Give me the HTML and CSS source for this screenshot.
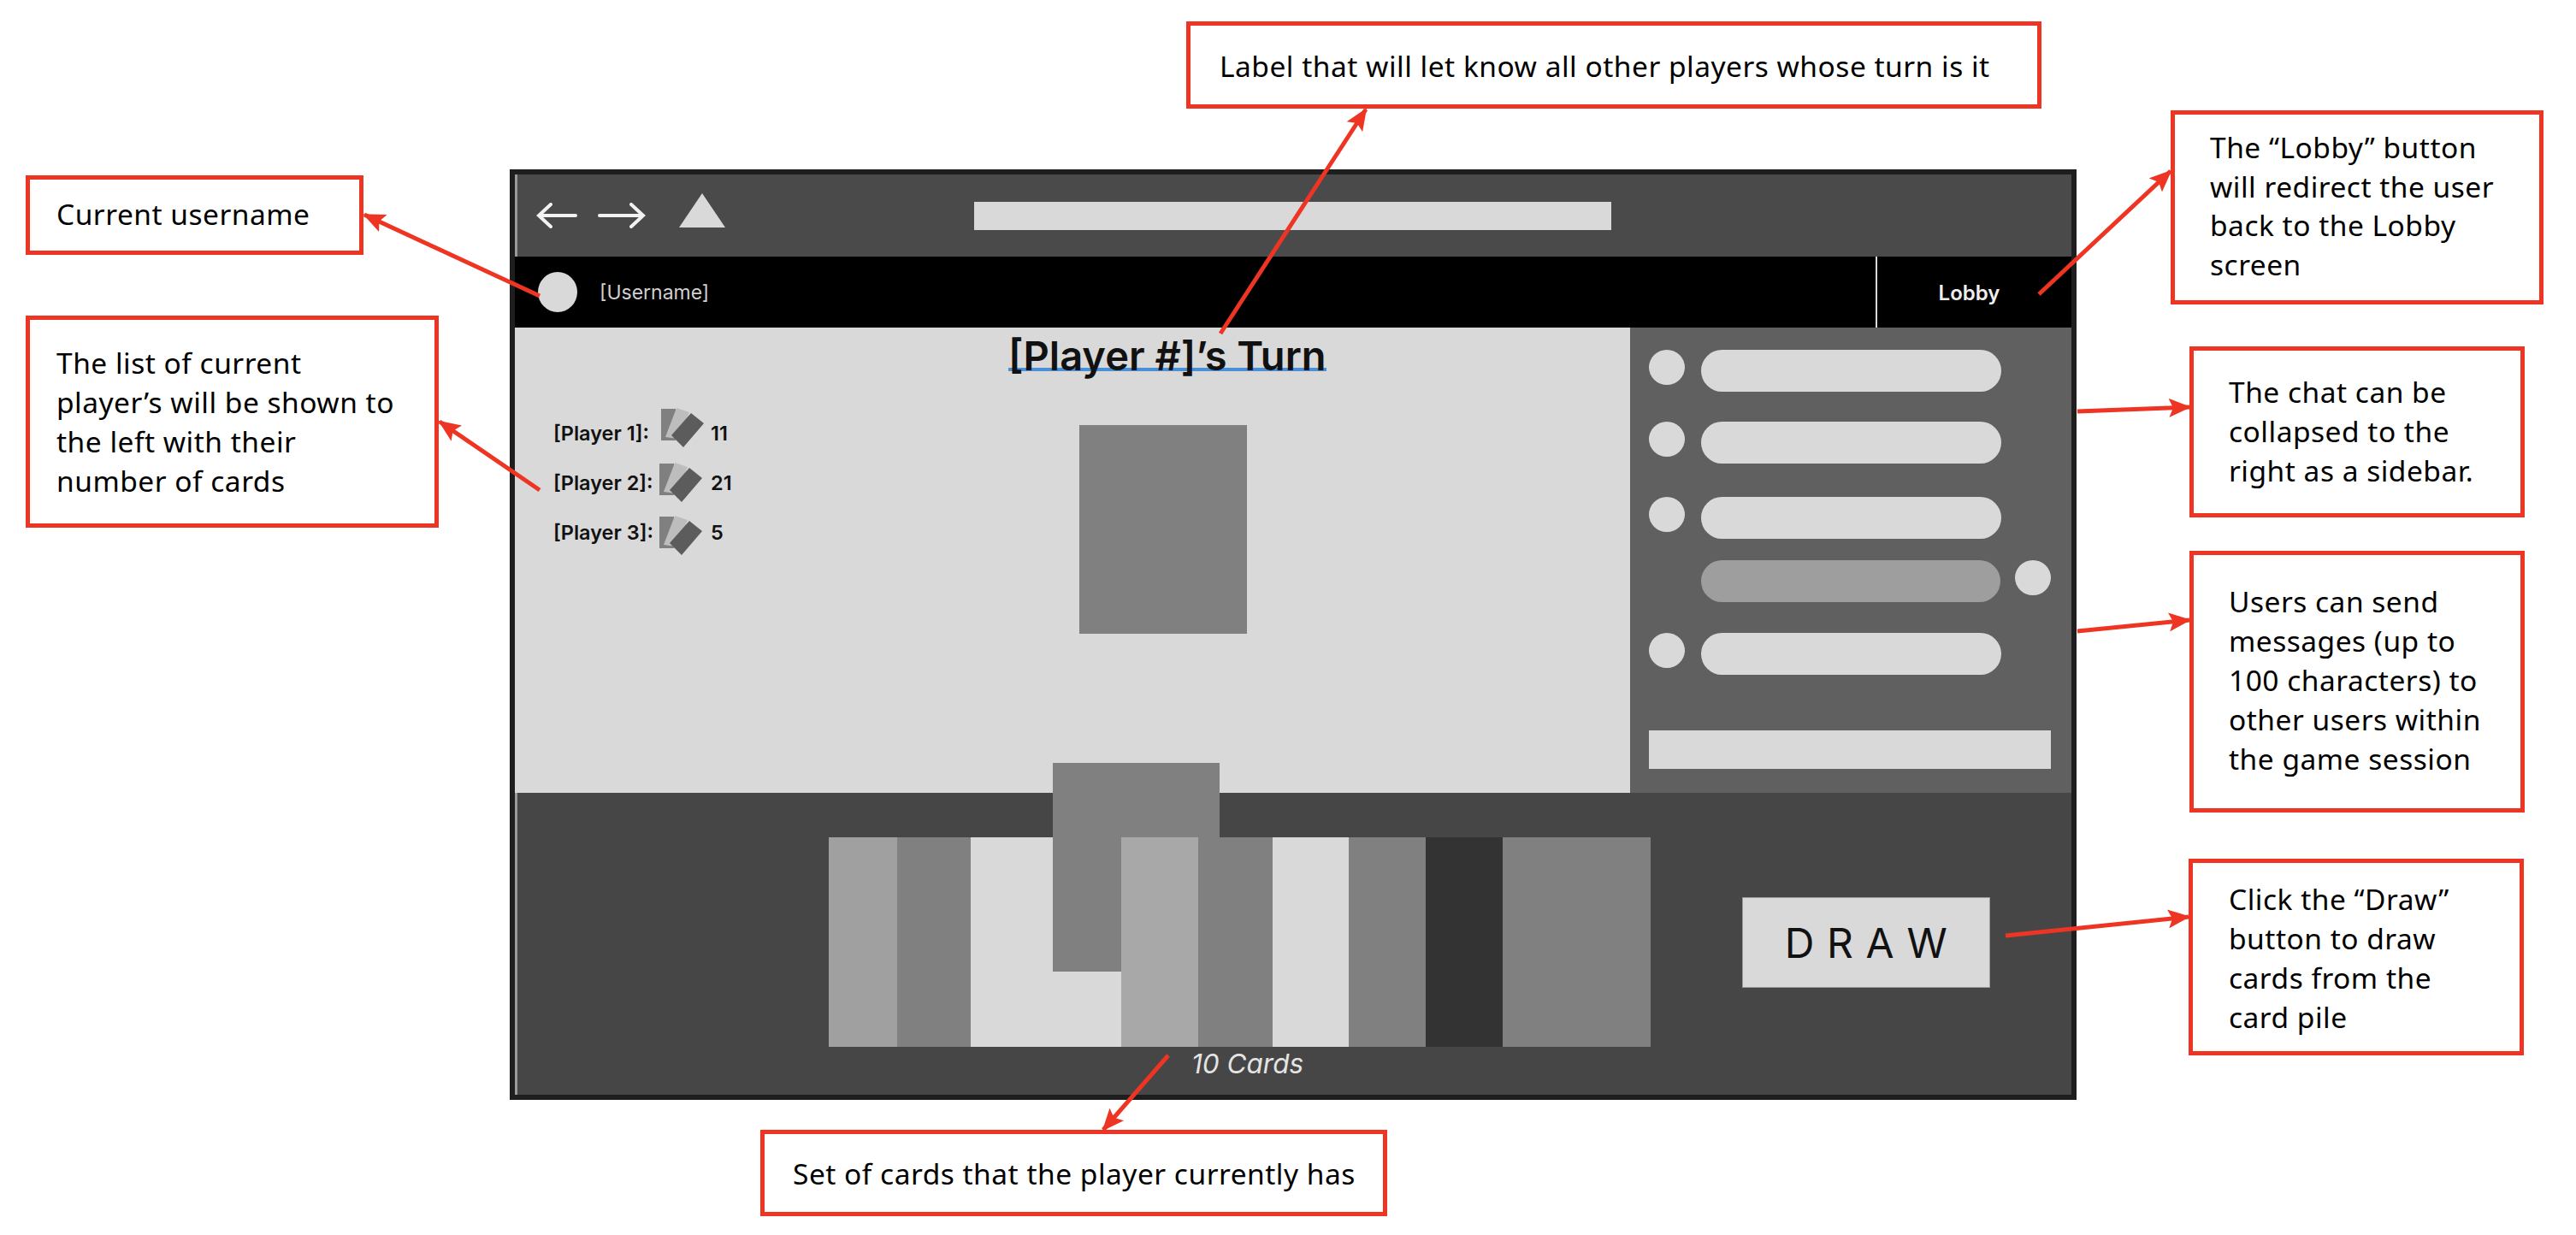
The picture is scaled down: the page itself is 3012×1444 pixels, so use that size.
FILE: index.html

```html
<!DOCTYPE html>
<html lang="en">
<head>
  <meta charset="UTF-8">
  <title>Game screen annotations</title>
  <link rel="stylesheet" href="styles.css">
</head>
<body>
  <div class="stage">
    <svg width="0" height="0" class="defs">
      <symbol id="hand" viewBox="0 0 50 46">
        <polygon points="0,1 17,1 17,38 0,38" fill="#808080"/>
        <polygon points="18,0 33,5 20,36 5,34" fill="#bdbdbd"/>
        <polygon points="35,6 50,18 26,46 12,32" fill="#5c5c5c"/>
      </symbol>
    </svg>

    <div class="frame">
      <div class="topbar">
        <svg class="nav-arrow" width="48" height="30" viewBox="0 0 48 30"><path d="M46 15H3M17 2L3 15l14 13" fill="none" stroke="#f2f2f2" stroke-width="4" stroke-linecap="round"/></svg>
        <svg class="nav-arrow" width="56" height="30" viewBox="0 0 56 30"><path d="M2 15h51M39 2l14 13-14 13" fill="none" stroke="#f2f2f2" stroke-width="4" stroke-linecap="round"/></svg>
        <svg class="nav-up" width="54" height="40" viewBox="0 0 54 40"><polygon points="27,0 54,40 0,40" fill="#d9d9d9"/></svg>
        <div class="address"></div>
      </div>

      <div class="userbar">
        <div class="avatar"></div>
        <span class="username">[Username]</span>
        <div class="lobby">Lobby</div>
      </div>

      <div class="main">
        <div class="table">
          <h1 class="turn"><span>[Player #]’s Turn</span></h1>
          <div class="table-row">
            <div class="players">
              <div class="player p1"><b>[Player 1]:</b><svg width="50" height="46"><use href="#hand"/></svg><b>11</b></div>
              <div class="player"><b>[Player 2]:</b><svg width="50" height="46"><use href="#hand"/></svg><b>21</b></div>
              <div class="player p3"><b>[Player 3]:</b><svg width="50" height="46"><use href="#hand"/></svg><b>5</b></div>
            </div>
            <div class="pile"></div>
          </div>
        </div>

        <div class="chat">
          <div class="msg"><div class="dot"></div><div class="bubble"></div></div>
          <div class="msg gap-35"><div class="dot"></div><div class="bubble"></div></div>
          <div class="msg gap-39"><div class="dot"></div><div class="bubble"></div></div>
          <div class="msg own gap-25"><div class="bubble"></div><div class="dot"></div></div>
          <div class="msg gap-36"><div class="dot"></div><div class="bubble"></div></div>
          <div class="chat-input"></div>
        </div>
      </div>

      <div class="bottom">
        <div class="hand">
          <div class="cards">
            <div class="card c-a"></div>
            <div class="card c-b"></div>
            <div class="card c-c"></div>
            <div class="card c-b lifted"></div>
            <div class="card c-d"></div>
            <div class="card c-b"></div>
            <div class="card c-c"></div>
            <div class="card c-b"></div>
            <div class="card c-e"></div>
            <div class="card c-b"></div>
          </div>
          <div class="count">10 Cards</div>
        </div>
        <div class="draw">D R A W</div>
      </div>
    </div>

    <svg class="arrows" width="3012" height="1444">
      <defs>
        <marker id="head" markerUnits="userSpaceOnUse" markerWidth="26" markerHeight="22" refX="24" refY="11" orient="auto">
          <polygon points="0,0 26,11 0,22 5,11" fill="#ee3524"/>
        </marker>
      </defs>
      <line x1="631" y1="346" x2="426" y2="251"/>
      <line x1="631" y1="573" x2="514" y2="493"/>
      <line x1="1427" y1="390" x2="1597" y2="128"/>
      <line x1="2384" y1="344" x2="2538" y2="200"/>
      <line x1="2429" y1="481" x2="2560" y2="476"/>
      <line x1="2429" y1="738" x2="2560" y2="725"/>
      <line x1="2345" y1="1094" x2="2559" y2="1072"/>
      <line x1="1366" y1="1234" x2="1290" y2="1321"/>
    </svg>

    <div class="note n-user"><p>Current username</p></div>
    <div class="note n-list"><p>The list of current<br>player’s will be shown to<br>the left with their<br>number of cards</p></div>
    <div class="note n-turn"><p>Label that will let know all other players whose turn is it</p></div>
    <div class="note n-lobby"><p>The “Lobby” button<br>will redirect the user<br>back to the Lobby<br>screen</p></div>
    <div class="note n-chat"><p>The chat can be<br>collapsed to the<br>right as a sidebar.</p></div>
    <div class="note n-send"><p>Users can send<br>messages (up to<br>100 characters) to<br>other users within<br>the game session</p></div>
    <div class="note n-draw"><p>Click the “Draw”<br>button to draw<br>cards from the<br>card pile</p></div>
    <div class="note n-hand"><p>Set of cards that the player currently has</p></div>
  </div>
</body>
</html>
```

FILE: styles.css

```css
body {
  margin: 0;
  background-color: #fff;
  font-family: Inter, sans-serif;
}
.stage {
  position: relative;
  width: 3012px;
  height: 1444px;
  overflow: hidden;
}
.defs {
  position: absolute;
}

/* the wireframe */
.frame {
  position: absolute;
  left: 596px;
  top: 198px;
  width: 1820px;
  height: 1076px;
  border: 6px solid #1e1e1e;
  display: flex;
  flex-direction: column;
}
.topbar {
  height: 96px;
  background-color: #4a4a4a;
  border-left: 3px solid #9a9a9a;
  display: flex;
  align-items: flex-start;
  padding-left: 22px;
}
.nav-arrow {
  margin-top: 33px;
  margin-right: 24px;
}
.nav-up {
  margin-top: 22px;
  margin-left: 15px;
}
.address {
  width: 745px;
  height: 33px;
  margin-top: 32px;
  margin-left: 291px;
  background-color: #d9d9d9;
}
.userbar {
  height: 83px;
  background-color: #000;
  display: flex;
  align-items: center;
  padding-left: 27px;
}
.avatar {
  width: 46px;
  height: 47px;
  border-radius: 50%;
  background-color: #d9d9d9;
}
.username {
  margin-left: 26px;
  color: #d0d0d0;
  font-size: 23px;
}
.lobby {
  margin-left: auto;
  width: 215px;
  height: 81px;
  padding: 2px 12px 0 0;
  border-left: 2px solid #d9d9d9;
  display: flex;
  align-items: center;
  justify-content: center;
  color: #eee;
  font-size: 24px;
  font-weight: 600;
}
.main {
  height: 544px;
  display: flex;
}
.table {
  flex: 1;
  background-color: #d9d9d9;
}
.turn {
  margin: 0;
  padding-left: 577px;
  height: 100px;
  font-size: 47px;
  font-weight: 600;
  line-height: 66px;
  color: #111;
}
.turn span {
  display: inline-block;
  height: 47px;
  border-bottom: 4px solid #4a90d9;
}
.table-row {
  display: flex;
  align-items: flex-start;
  padding-left: 45px;
}
.players {
  width: 615px;
}
.player {
  display: grid;
  grid-template-columns: 124px 60px auto;
  align-items: center;
  height: 46px;
  margin-bottom: 12px;
  font-size: 23.5px;
  color: #111;
}
.player b {
  font-weight: 600;
}
/* the little card icons don't sit on the same pitch as the text */
.p1 svg {
  margin: -6px 0 6px 2px;
}
.p3 svg {
  margin: 4px 0 -4px;
}
.pile {
  width: 196px;
  height: 244px;
  margin-top: 14px;
  background-color: #808080;
}
.chat {
  width: 516px;
  background-color: #606060;
  display: flex;
  flex-direction: column;
  padding: 26px 24px 28px 22px;
  box-sizing: border-box;
}
.msg {
  display: flex;
  gap: 19px;
  height: 49px;
}
.own {
  padding-left: 61px;
  gap: 17px;
}
.gap-25 { margin-top: 25px; }
.gap-35 { margin-top: 35px; }
.gap-36 { margin-top: 36px; }
.gap-39 { margin-top: 39px; }
.dot {
  width: 42px;
  height: 41px;
  border-radius: 50%;
  background-color: #d9d9d9;
}
.bubble {
  width: 351px;
  height: 49px;
  border-radius: 25px;
  background-color: #d9d9d9;
}
.own .bubble {
  background-color: #9e9e9e;
}
.chat-input {
  margin-top: auto;
  height: 45px;
  width: 470px;
  background-color: #d9d9d9;
}
.bottom {
  flex: 1;
  background-color: #464646;
  border-left: 3px solid #9a9a9a;
  display: flex;
  align-items: flex-start;
  padding: 52px 0 0 364px;
}
.hand {
  width: 961px;
}
.cards {
  display: grid;
  grid-template-columns: 80px 86px 96px 80px 90px 87px 89px 90px 90px 173px;
  height: 245px;
  align-items: start;
}
.card {
  width: 176px;
  height: 245px;
}
.c-a { background-color: #a0a0a0; }
.c-b { background-color: #808080; }
.c-c { background-color: #d9d9d9; }
.c-d { background-color: #a8a8a8; }
.c-e { background-color: #333; }
.card:last-child {
  width: 173px;
}
.lifted {
  width: 195px;
  height: 244px;
  margin-top: -87px;
}
.count {
  padding-left: 424px;
  font-size: 31.5px;
  font-style: italic;
  color: #e4e4e4;
}
.draw {
  width: 288px;
  height: 104px;
  margin-top: 70px;
  margin-left: 107px;
  border: 1px solid #9a9a9a;
  background-color: #d9d9d9;
  color: #111;
  font-size: 48px;
  font-weight: 400;
  letter-spacing: 0.6px;
  display: flex;
  align-items: center;
  justify-content: center;
}

/* callouts on the canvas */
.arrows {
  position: absolute;
  left: 0;
  top: 0;
}
.arrows line {
  stroke: #ee3524;
  stroke-width: 5;
  marker-end: url(#head);
}
.note {
  position: absolute;
  box-sizing: border-box;
  border: 5px solid #ee3524;
  background-color: #fff;
  color: #000;
  font-family: "Noto Sans", sans-serif;
  font-size: 33.5px;
  letter-spacing: 0.5px;
  line-height: 46px;
}
.note p {
  margin: 0;
}
.n-user { left: 30px; top: 205px; width: 395px; height: 93px; padding: 17px 0 0 31px; }
.n-list { left: 30px; top: 369px; width: 483px; height: 248px; padding: 27px 0 0 31px; }
.n-turn { left: 1387px; top: 25px; width: 1000px; height: 102px; padding: 24px 0 0 34px; }
.n-lobby { left: 2538px; top: 129px; width: 436px; height: 227px; padding: 16px 0 0 41px; line-height: 45.5px; }
.n-chat { left: 2560px; top: 405px; width: 392px; height: 200px; padding: 25px 0 0 41px; }
.n-send { left: 2560px; top: 644px; width: 392px; height: 306px; padding: 31px 0 0 41px; }
.n-draw { left: 2559px; top: 1004px; width: 392px; height: 230px; padding: 19px 0 0 42px; }
.n-hand { left: 889px; top: 1321px; width: 733px; height: 101px; padding: 23px 0 0 33px; }
```
